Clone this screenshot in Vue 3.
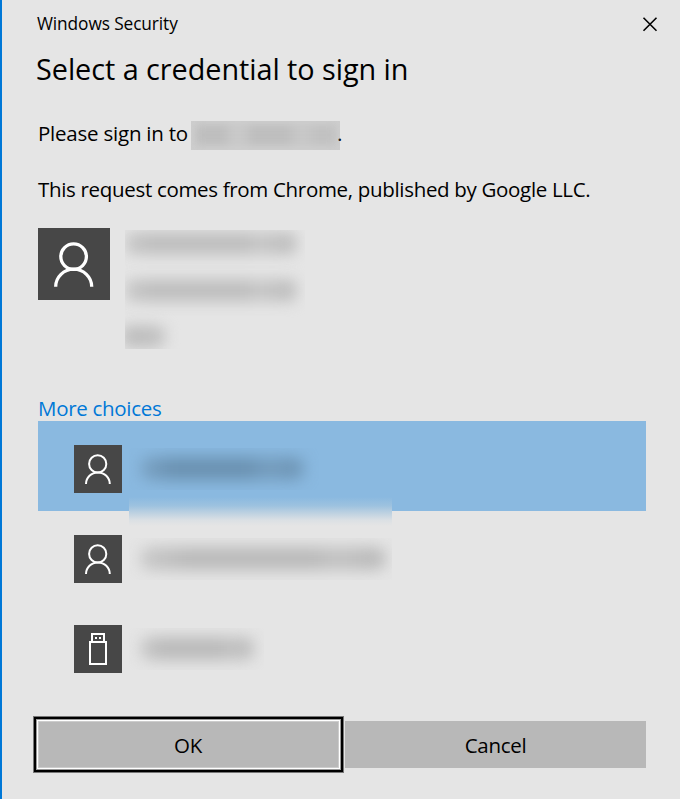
<script setup>
const account = [
  { id: 'name', start: 0, width: 172 },
  { id: 'user', start: 0, width: 172 },
  { id: 'kind', start: -4, width: 44 },
]
const choices = [
  { id: 'first', icon: 'person', selected: true, clip: 190, width: 164 },
  { id: 'second', icon: 'person', selected: false, clip: 263, width: 246 },
  { id: 'key', icon: 'usb', selected: false, clip: 135, width: 114 },
]
</script>

<template>
  <main class="dialog">
    <header class="titlebar">
      <span class="caption">Windows Security</span>
      <button class="close" aria-label="Close">
        <svg width="16" height="16" viewBox="0 0 16 16"><path d="M1.5 1.8 14.5 14.8M14.5 1.8 1.5 14.8" /></svg>
      </button>
    </header>

    <h1><span class="heading">Select a credential to sign in</span></h1>
    <p class="site"><span class="signin">Please sign in to</span><span class="site-mask"><i></i></span><span class="dot">.</span></p>
    <p class="request"><span class="origin">This request comes from Chrome, published by Google LLC.</span></p>

    <section class="account">
      <div class="avatar large">
        <svg width="72" height="72" viewBox="0 0 72 72">
          <circle cx="35.6" cy="28.6" r="12.8" /><path d="M17.7 58.7A18 17.5 0 0 1 53.7 58.7" />
        </svg>
      </div>
      <div class="account-mask">
        <div v-for="line in account" :key="line.id" class="mask-line">
          <i :style="{ width: line.width + 'px', marginLeft: line.start + 'px' }"></i>
        </div>
      </div>
    </section>

    <a class="more"><span class="more-text">More choices</span></a>
    <ul class="choices">
      <li v-for="c in choices" :key="c.id" :class="{ selected: c.selected }">
        <div class="avatar">
          <svg v-if="c.icon === 'person'" width="48" height="48" viewBox="0 0 48 48">
            <circle cx="23.7" cy="18.9" r="8.6" /><path d="M12 39A11.9 11.6 0 0 1 35.8 39" />
          </svg>
          <svg v-else width="48" height="48" viewBox="0 0 48 48" class="usb">
            <path d="M18 17V9H30V17M16 17H32V39H16Z" /><path class="pins" d="M21 12h2v2h-2zM25 12h2v2h-2z" />
          </svg>
        </div>
        <div class="choice-mask" :style="{ width: c.clip + 'px' }"><i :style="{ width: c.width + 'px' }"></i></div>
        <div v-if="c.selected" class="fade"></div>
      </li>
    </ul>

    <footer>
      <button class="ok"><span>OK</span></button>
      <button class="cancel"><span>Cancel</span></button>
    </footer>
  </main>
</template>

<style>
body { margin: 0; background: #e5e5e5; }
</style>

<style scoped>
.dialog {
  box-sizing: border-box;
  width: 680px;
  height: 799px;
  padding-left: 36px;
  border-left: 2px solid #0078d7;
  background: #e5e5e5;
  color: #000;
  font-family: "Open Sans", "Noto Sans", sans-serif;
  font-size: 20.5px;
  overflow: hidden;
}
h1, p, ul { margin: 0; padding: 0; font-weight: 400; }
span { white-space: nowrap; }
i { display: block; }
button { border: 0; padding: 0; font: inherit; color: inherit; }
.titlebar { display: flex; align-items: center; justify-content: space-between; height: 48px; }
.caption { margin: -2px 0 0 -1px; font-size: 17.3px; letter-spacing: -0.1px; }
.close { display: flex; width: 16px; height: 16px; margin-right: 22px; background: none; }
.close path { stroke: #000; stroke-width: 1.6; fill: none; }
h1 { height: 42px; line-height: 42px; font-size: 28.8px; letter-spacing: -0.04px; }
.heading { margin-left: -2px; }
.site { display: flex; height: 30px; margin-top: 30px; line-height: 26px; }
.signin { width: 153px; letter-spacing: -0.22px; }
.site-mask { width: 149px; height: 29px; margin-top: 1px; background: #cecece; overflow: hidden; }
.site-mask i {
  width: 140px;
  height: 20px;
  margin: 4px 0 0 5px;
  filter: blur(4.5px);
  background: linear-gradient(90deg, #bebebe 0 20%, #c8c8c8 25% 35%, #bebebe 40% 65%, #c7c7c7 72% 80%, #c1c1c1 86%);
}
.dot { margin-left: -3px; }
.request { height: 28px; margin-top: 25px; line-height: 28px; }
.origin { letter-spacing: -0.32px; }
.account { display: flex; gap: 15px; height: 121px; margin-top: 25px; }
.avatar { display: flex; flex: none; width: 48px; height: 48px; background: #474747; }
.avatar.large { width: 72px; height: 72px; }
.avatar svg { fill: none; stroke: #fff; stroke-width: 2; }
.avatar.large svg { stroke-width: 3.3; }
.usb .pins { fill: #fff; stroke: none; }
.account-mask { width: 180px; height: 119px; margin-top: 2px; overflow: hidden; }
.mask-line { height: 46.5px; padding-top: 2px; box-sizing: border-box; }
.mask-line i {
  height: 23px;
  border-radius: 8px;
  filter: blur(7px);
  background: linear-gradient(90deg, #cacaca 0, #bfbfbf 15% 70%, #c8c8c8 78%, #c1c1c1 90%);
}
.more { display: block; height: 26px; margin-top: 46px; line-height: 26px; color: #0078d7; }
.more-text { letter-spacing: -0.3px; }
.choices { list-style: none; width: 608px; }
.choices li { position: relative; display: flex; align-items: center; gap: 7px; height: 90px; padding: 6px 0 0 36px; box-sizing: border-box; }
.choices li.selected { background: #8ab9e0; z-index: 1; }
.choice-mask { height: 42px; overflow: hidden; }
.choice-mask i {
  height: 23px;
  margin: 9px 0 0 11px;
  border-radius: 10px;
  filter: blur(7.5px);
  background: linear-gradient(90deg, #c8c8c8, #b9b9b9 20% 70%, #c2c2c2 80%, #bababa 94%);
}
.selected .choice-mask i { background: linear-gradient(90deg, #7ba3c5, #6a91b0 20% 65%, #759dbe 78%, #6f96b6 92%); }
.fade { position: absolute; left: 91px; top: 76px; width: 263px; height: 29px; background: linear-gradient(#8ab9e0, #9dc2df 30%, #bdd1e1 55%, #dbe0e4 80%, #e5e5e5); }
footer { display: flex; align-items: center; gap: 1px; height: 57px; margin: 25px 0 0 -5px; }
.ok {
  width: 311px;
  height: 57px;
  background: #b8b8b8;
  box-shadow: inset 0 0 0 1px #777, inset 0 0 0 3px #000, inset 0 0 0 4px #999, inset 0 0 0 5px #fff, inset 0 0 0 6px #ccc;
}
.cancel { width: 301px; height: 47px; background: #b8b8b8; }
.ok span, .cancel span { letter-spacing: -0.3px; }
.ok span { margin-right: 1px; }
</style>
